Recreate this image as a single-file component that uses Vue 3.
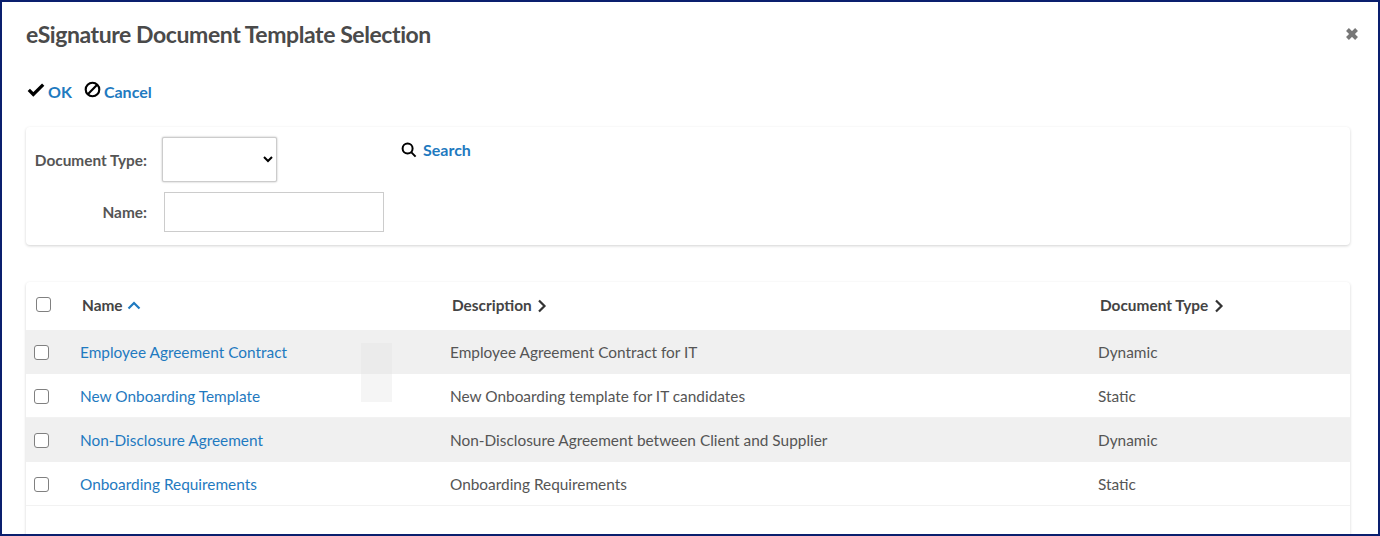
<template>
  <div class="dialog">
    <div class="head">
      <h1 class="title">eSignature Document Template Selection</h1>
      <svg class="close" viewBox="0 0 12 12"><path d="M2.6 2.6l6.8 6.8M9.4 2.6l-6.8 6.8" /></svg>
    </div>

    <div class="actions">
      <a class="action ok">
        <svg class="ico-check" viewBox="0 0 20 16"><path d="M2 8.5l5 5L18 2.5" /></svg>
        <span>OK</span>
      </a>
      <a class="action cancel">
        <svg class="ico-cancel" viewBox="0 0 16 16"><circle cx="8" cy="8" r="6.4" /><path d="M3.6 12.4l8.8-8.8" /></svg>
        <span>Cancel</span>
      </a>
    </div>

    <div class="card filters">
      <div class="fields">
        <div class="field first">
          <label>Document Type:</label>
          <select class="select"><option></option></select>
        </div>
        <div class="field">
          <label>Name:</label>
          <input class="input" type="text" />
        </div>
      </div>
      <a class="search">
        <svg viewBox="0 0 16 16"><circle cx="6.6" cy="6.6" r="5" /><path d="M10.4 10.4l4.2 4.2" /></svg>
        <span>Search</span>
      </a>
    </div>

    <div class="card results">
      <div class="row header">
        <span class="check-cell"><span class="box"></span></span>
        <span class="col-name">Name
          <svg class="sort up" viewBox="0 0 14 10"><path d="M1.5 8.5L7 3l5.5 5.5" /></svg>
        </span>
        <span class="col-desc">Description
          <svg class="sort" viewBox="0 0 10 14"><path d="M2 1.5L7.5 7 2 12.5" /></svg>
        </span>
        <span class="col-type">Document Type
          <svg class="sort" viewBox="0 0 10 14"><path d="M2 1.5L7.5 7 2 12.5" /></svg>
        </span>
      </div>
      <div v-for="(r, i) in rows" :key="r.name" class="row item" :class="{ odd: i % 2 === 0 }">
        <span class="check-cell"><span class="box"></span></span>
        <a class="col-name link">{{ r.name }}</a>
        <span class="col-desc">{{ r.desc }}</span>
        <span class="col-type">{{ r.type }}</span>
      </div>
      <div class="patch one"></div>
      <div class="patch two"></div>
    </div>
  </div>
</template>

<script setup>
const rows = [
  { name: 'Employee Agreement Contract', desc: 'Employee Agreement Contract for IT', type: 'Dynamic' },
  { name: 'New Onboarding Template', desc: 'New Onboarding template for IT candidates', type: 'Static' },
  { name: 'Non-Disclosure Agreement', desc: 'Non-Disclosure Agreement between Client and Supplier', type: 'Dynamic' },
  { name: 'Onboarding Requirements', desc: 'Onboarding Requirements', type: 'Static' }
]
</script>

<style>
html, body { margin: 0; background: #fff; }
</style>

<style scoped>
.dialog {
  box-sizing: border-box;
  width: 1380px; height: 536px;
  border: 2px solid #0a1f6e;
  background: #fff;
  padding: 0 28px 0 24px;
  overflow: hidden;
  font-family: Lato, "Open Sans", sans-serif;
  color: #444;
  font-size: 15.4px;
}
.head { display: flex; align-items: center; justify-content: space-between; height: 64px; }
.title { margin: 0; font-size: 23px; font-weight: 700; color: #4a4a4a; letter-spacing: -.42px; }
.close { width: 16px; height: 16px; margin-right: -10px; }
.close path { stroke: #777; stroke-width: 3; fill: none; }

.actions { display: flex; align-items: center; gap: 12px; height: 50px; margin-left: 1px; }
.action { display: flex; align-items: center; gap: 3px; color: #1f7ac0; font-weight: 700; font-size: 16px; }
.action svg { fill: none; stroke: #000; }
.ico-check { width: 18px; height: 15px; margin-top: -4px; }
.ico-check path { stroke-width: 3.6; }
.ico-cancel { width: 17px; height: 17px; margin-top: -4px; }
.ico-cancel circle, .ico-cancel path { stroke-width: 2; }

.card {
  background: #fff;
  border-radius: 4px;
  box-shadow: 0 1px 3px rgba(0,0,0,.18);
}
.filters {
  display: flex; align-items: flex-start;
  height: 118px; margin-top: 11px;
  box-sizing: border-box;
}
.fields { width: 375px; padding-top: 10px; }
.field { display: flex; align-items: center; }
.field.first { margin-bottom: 10px; }
.field label { width: 121px; text-align: right; font-weight: 700; color: #555; margin-right: 15px; }
.select {
  width: 115px; height: 45px;
  background: #fff; border: 1px solid #ccc; border-radius: 2px;
  box-shadow: 0 0 2px rgba(0,0,0,.3);
}
.input {
  box-sizing: border-box; width: 220px; height: 40px; margin-left: 2px;
  border: 1px solid #ccc; background: #fff; padding: 0; outline: none;
}
.search { display: flex; align-items: center; gap: 6px; margin-top: 13px; color: #1f7ac0; font-weight: 700; font-size: 16px; }
.search svg { width: 16px; height: 16px; fill: none; stroke: #000; stroke-width: 2; }

.results { position: relative; margin-top: 37px; height: 260px; }
.row { display: grid; grid-template-columns: 54px 370px 648px 1fr; align-items: center; }
.header { height: 48px; padding-bottom: 3px; box-sizing: border-box; font-weight: 700; color: #444; }
.header .col-name { padding-left: 2px; }
.header .col-desc, .header .col-type { padding-left: 2px; }
.item { height: 44px; border-bottom: 1px solid #f2f2f2; box-sizing: border-box; color: #555; }
.item.odd { background: #f0f0f0; border-bottom-color: #f0f0f0; }
.check-cell { display: flex; padding-left: 8px; }
.item .check-cell { padding-top: 1px; }
.header .check-cell { padding-left: 10px; padding-bottom: 1px; }
.box {
  box-sizing: border-box; width: 15px; height: 15px;
  border: 1.5px solid #808080; border-radius: 3px; background: #fff;
}
.link { color: #1f7ac0; }
.sort { display: inline-block; fill: none; stroke: #333; stroke-width: 2.2; vertical-align: -2px; }
.sort { width: 10px; height: 14px; margin-left: 2px; }
.sort.up { width: 14px; height: 10px; margin-left: 1px; stroke: #1f7ac0; vertical-align: 1px; }

.patch { position: absolute; left: 335px; width: 31px; }
.patch.one { top: 61px; height: 31px; background: #ebebeb; }
.patch.two { top: 92px; height: 28px; background: #f5f5f5; }
</style>
